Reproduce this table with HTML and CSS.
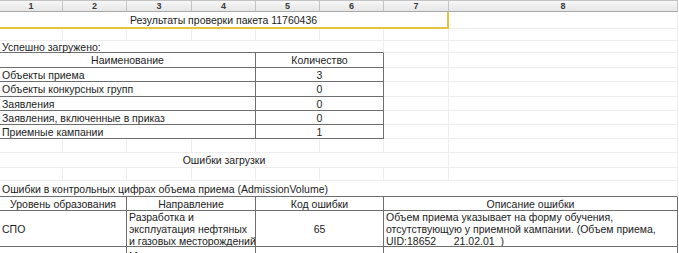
FILE: index.html
```html
<!DOCTYPE html>
<html lang="ru">
<head>
<meta charset="utf-8">
<title>Результаты проверки пакета</title>
<link rel="stylesheet" href="styles.css">
</head>
<body>
<div class="sheet">
  <div class="h">1</div><div class="h">2</div><div class="h">3</div><div class="h">4</div><div class="h">5</div><div class="h">6</div><div class="h">7</div><div class="h">8</div>

  <div class="c s7 title center">Результаты проверки пакета 11760436</div><div class="c"></div>

  <div class="c"></div><div class="c"></div><div class="c"></div><div class="c"></div><div class="c"></div><div class="c"></div><div class="c"></div><div class="c"></div>

  <div class="c s6 tb">Успешно загружено:</div><div class="c"></div><div class="c"></div>

  <div class="c s4 t center">Наименование</div><div class="c s2 t center">Количество</div><div class="c"></div><div class="c"></div>
  <div class="c s4 t">Объекты приема</div><div class="c s2 t center">3</div><div class="c"></div><div class="c"></div>
  <div class="c s4 t">Объекты конкурсных групп</div><div class="c s2 t center">0</div><div class="c"></div><div class="c"></div>
  <div class="c s4 t">Заявления</div><div class="c s2 t center">0</div><div class="c"></div><div class="c"></div>
  <div class="c s4 t">Заявления, включенные в приказ</div><div class="c s2 t center">0</div><div class="c"></div><div class="c"></div>
  <div class="c s4 t">Приемные кампании</div><div class="c s2 t center">1</div><div class="c"></div><div class="c"></div>

  <div class="c"></div><div class="c"></div><div class="c"></div><div class="c"></div><div class="c"></div><div class="c"></div><div class="c"></div><div class="c"></div>

  <div class="c s7 center">Ошибки загрузки</div><div class="c"></div>

  <div class="c"></div><div class="c"></div><div class="c"></div><div class="c"></div><div class="c"></div><div class="c"></div><div class="c"></div><div class="c"></div>

  <div class="c s8 tb">Ошибки в контрольных цифрах объема приема (AdmissionVolume)</div>

  <div class="c s2 t center">Уровень образования</div><div class="c s2 t center">Направление</div><div class="c s2 t center">Код ошибки</div><div class="c s2 t center">Описание ошибки</div>

  <div class="c s2 t">СПО</div>
  <div class="c s2 t multi">Разработка и<br>эксплуатация нефтяных<br>и газовых месторождений</div>
  <div class="c s2 t center">65</div>
  <div class="c s2 t multi">Объем приема указывает на форму обучения,<br>отсутствующую у приемной кампании. (Объем приема,<br>UID:18652&nbsp;&nbsp;&nbsp;&nbsp;_21.02.01&nbsp;&nbsp;)</div>

  <div class="c s2 t"></div>
  <div class="c s2 t multi next">Монтаж и техническая<br>эксплуатация</div>
  <div class="c s2 t"></div>
  <div class="c s2 t multi"></div>
</div>
</body>
</html>
```

FILE: styles.css
```css
html, body {
  margin: 0;
  padding: 0;
  background: #ffffff;
}

body {
  font-family: "Liberation Sans", Arial, sans-serif;
  font-size: 10.5px;
  color: #222222;
  overflow: hidden;
}

.sheet {
  display: grid;
  width: 678px;
  grid-template-columns: 63px 64px 65px 64px 64px 64px 65px 229px;
  grid-template-rows: 12px 17px 12px 12px 15px 14px 15px 14px 14px 14px 14px 15px 13px 16px 14px 36px 30px;
}

.h {
  box-sizing: border-box;
  background: linear-gradient(#f7f7f7, #e6e6e6);
  border-top: 1px solid #c4c4c4;
  border-right: 1px solid #c4c4c4;
  border-bottom: 1px solid #a9a9a9;
  font-size: 9px;
  line-height: 10px;
  font-weight: bold;
  color: #3a3a3a;
  text-align: center;
}

.c {
  box-sizing: border-box;
  border-right: 1px solid #ededed;
  border-bottom: 1px solid #ededed;
  padding: 0 2px;
  white-space: nowrap;
  display: flex;
  align-items: center;
  overflow: visible;
}

.center {
  justify-content: center;
}

.s2 { grid-column: span 2; }
.s4 { grid-column: span 4; }
.s6 { grid-column: span 6; }
.s7 { grid-column: span 7; }
.s8 { grid-column: span 8; }

.title {
  border-right: 2px solid #e3c33f;
  border-bottom: 2px solid #e3c33f;
}

.tb {
  border-bottom-color: #6e6e6e;
}

.t {
  border-right-color: #6e6e6e;
  border-bottom-color: #6e6e6e;
}

.multi {
  display: block;
  line-height: 12px;
  padding-top: 0;
  overflow: hidden;
}

.next {
  padding-top: 3px;
}
```
